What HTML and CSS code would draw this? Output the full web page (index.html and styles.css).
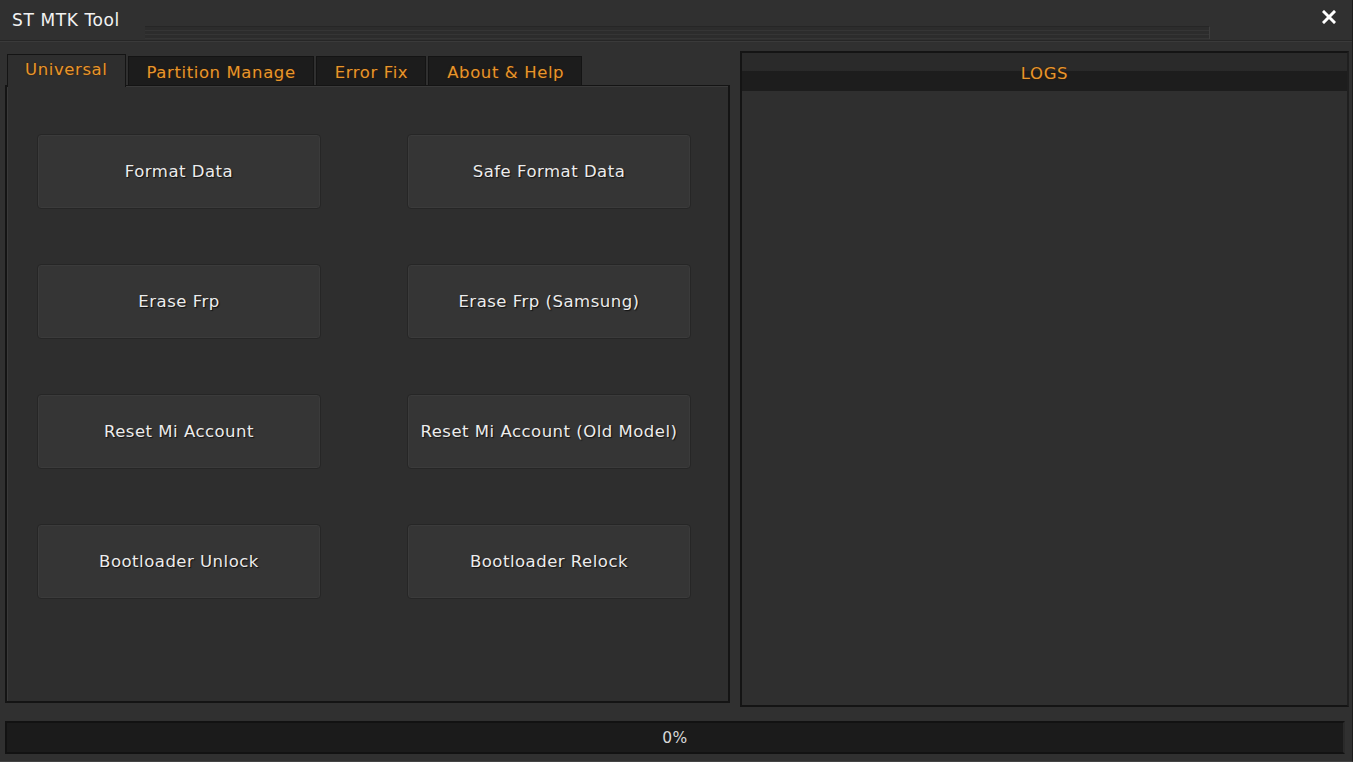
FILE: index.html
```html
<!DOCTYPE html>
<html>
<head>
  <meta charset="utf-8">
  <title>ST MTK Tool</title>
  <link rel="stylesheet" href="styles.css">
</head>
<body>
  <div class="window">
    <div class="titlebar">
      <span class="title">ST MTK Tool</span>
      <div class="groove"></div>
      <svg class="close" width="14" height="14" viewBox="0 0 14 14">
        <path d="M2 2 L12 12 M12 2 L2 12" stroke="#ffffff" stroke-width="3" stroke-linecap="square"/>
      </svg>
    </div>
    <div class="main">
      <div class="left">
        <div class="tabs">
          <div class="tab active">Universal</div>
          <div class="tab">Partition Manage</div>
          <div class="tab">Error Fix</div>
          <div class="tab">About &amp; Help</div>
        </div>
        <div class="tab-page">
          <div class="btn-grid">
            <div class="btn">Format Data</div>
            <div class="btn">Safe Format Data</div>
            <div class="btn">Erase Frp</div>
            <div class="btn">Erase Frp (Samsung)</div>
            <div class="btn">Reset Mi Account</div>
            <div class="btn">Reset Mi Account (Old Model)</div>
            <div class="btn">Bootloader Unlock</div>
            <div class="btn">Bootloader Relock</div>
          </div>
        </div>
      </div>
      <div class="logs">
        <div class="logs-head">LOGS</div>
        <div class="logs-body"></div>
      </div>
    </div>
    <div class="progress">0%</div>
  </div>
</body>
</html>
```

FILE: styles.css
```css
/* base */
html, body {
  margin: 0;
  padding: 0;
  background: #ffffff;
  font-family: "DejaVu Sans", Verdana, sans-serif;
}

.window {
  width: 1353px;
  height: 762px;
  background: #303030;
  box-sizing: border-box;
  border-right: 1px solid #1c1c1c;
  border-bottom: 1px solid #444;
  display: flex;
  flex-direction: column;
}

/* title bar */
.titlebar {
  height: 40px;
  display: flex;
  align-items: flex-start;
  border-bottom: 1px solid #262626;
  box-shadow: 0 1px 0 #3a3a3a;
}

.title {
  color: #f2f2f2;
  font-size: 17px;
  letter-spacing: 0.6px;
  padding: 10px 0 0 12px;
  width: 133px;
  white-space: nowrap;
}

.groove {
  flex: 1;
  margin-top: 26px;
  height: 12px;
  border-top: 1px solid #262626;
  border-right: 1px solid #3e3e3e;
  background: repeating-linear-gradient(#2c2c2c 0, #2c2c2c 3px, #353535 3px, #353535 4px);
  margin-right: 112px;
}

.close {
  margin-top: 10px;
  margin-right: 16px;
}

/* main area */
.main {
  display: flex;
  padding: 10px 3px 0 5px;
  gap: 10px;
  height: 656px;
}

.left {
  width: 726px;
  display: flex;
  flex-direction: column;
  padding-top: 3px;
}

.tabs {
  display: flex;
  gap: 2px;
  padding-left: 2px;
  height: 31px;
}

.tab {
  color: #e8952c;
  font-size: 16.5px;
  letter-spacing: 0.6px;
  background: #1c1c1c;
  border: 1px solid #141414;
  border-bottom: none;
  height: 29px;
  margin-top: 2px;
  line-height: 31px;
  padding: 0 17px 0 18px;
  text-shadow: 0 0 2px #3a2000;
  white-space: nowrap;
}

.tab.active {
  background: #2e2e2e;
  border-color: #141414;
  height: 32px;
  margin-top: 0;
  margin-bottom: -2px;
  position: relative;
  z-index: 1;
  padding: 0 17px 0 17px;
  line-height: 30px;
}

.tab-page {
  width: 725px;
  height: 618px;
  box-sizing: border-box;
  border: 2px solid #141414;
  border-top-width: 1px;
  background: #2e2e2e;
  box-shadow: inset 1px 1px 0 #3a3a3a;
}

.btn-grid {
  display: grid;
  grid-template-columns: 284px 284px;
  grid-auto-rows: 75px;
  column-gap: 86px;
  row-gap: 55px;
  padding: 48px 0 0 30px;
}

.btn {
  background: #353535;
  border: 1px solid #262626;
  border-radius: 4px;
  box-shadow: inset 0 0 0 1px #3b3b3b;
  color: #ececec;
  font-size: 16.5px;
  letter-spacing: 0.5px;
  display: flex;
  align-items: center;
  justify-content: center;
  text-shadow: 1px 1px 1px #111;
  white-space: nowrap;
}

/* logs */
.logs {
  width: 610px;
  height: 656px;
  box-sizing: border-box;
  border: 2px solid #141414;
  border-right-color: #1f1f1f;
  background: #2f2f2f;
  display: flex;
  flex-direction: column;
}

.logs-head {
  height: 38px;
  background: linear-gradient(#2a2a2a 0, #2a2a2a 46%, #1d1d1d 48%, #1d1d1d 100%);
  color: #e8952c;
  font-size: 16.5px;
  letter-spacing: 0.6px;
  text-align: center;
  line-height: 42px;
  text-shadow: 0 0 2px #3a2000;
}

.logs-body {
  flex: 1;
}

/* progress */
.progress {
  margin: 14px 7px 0 5px;
  height: 33px;
  box-sizing: border-box;
  background: #1b1b1b;
  border: 2px solid #121212;
  border-right-color: #2a2a2a;
  color: #d8d8d8;
  font-size: 15.5px;
  letter-spacing: 0.5px;
  text-align: center;
  line-height: 31px;
}
```
